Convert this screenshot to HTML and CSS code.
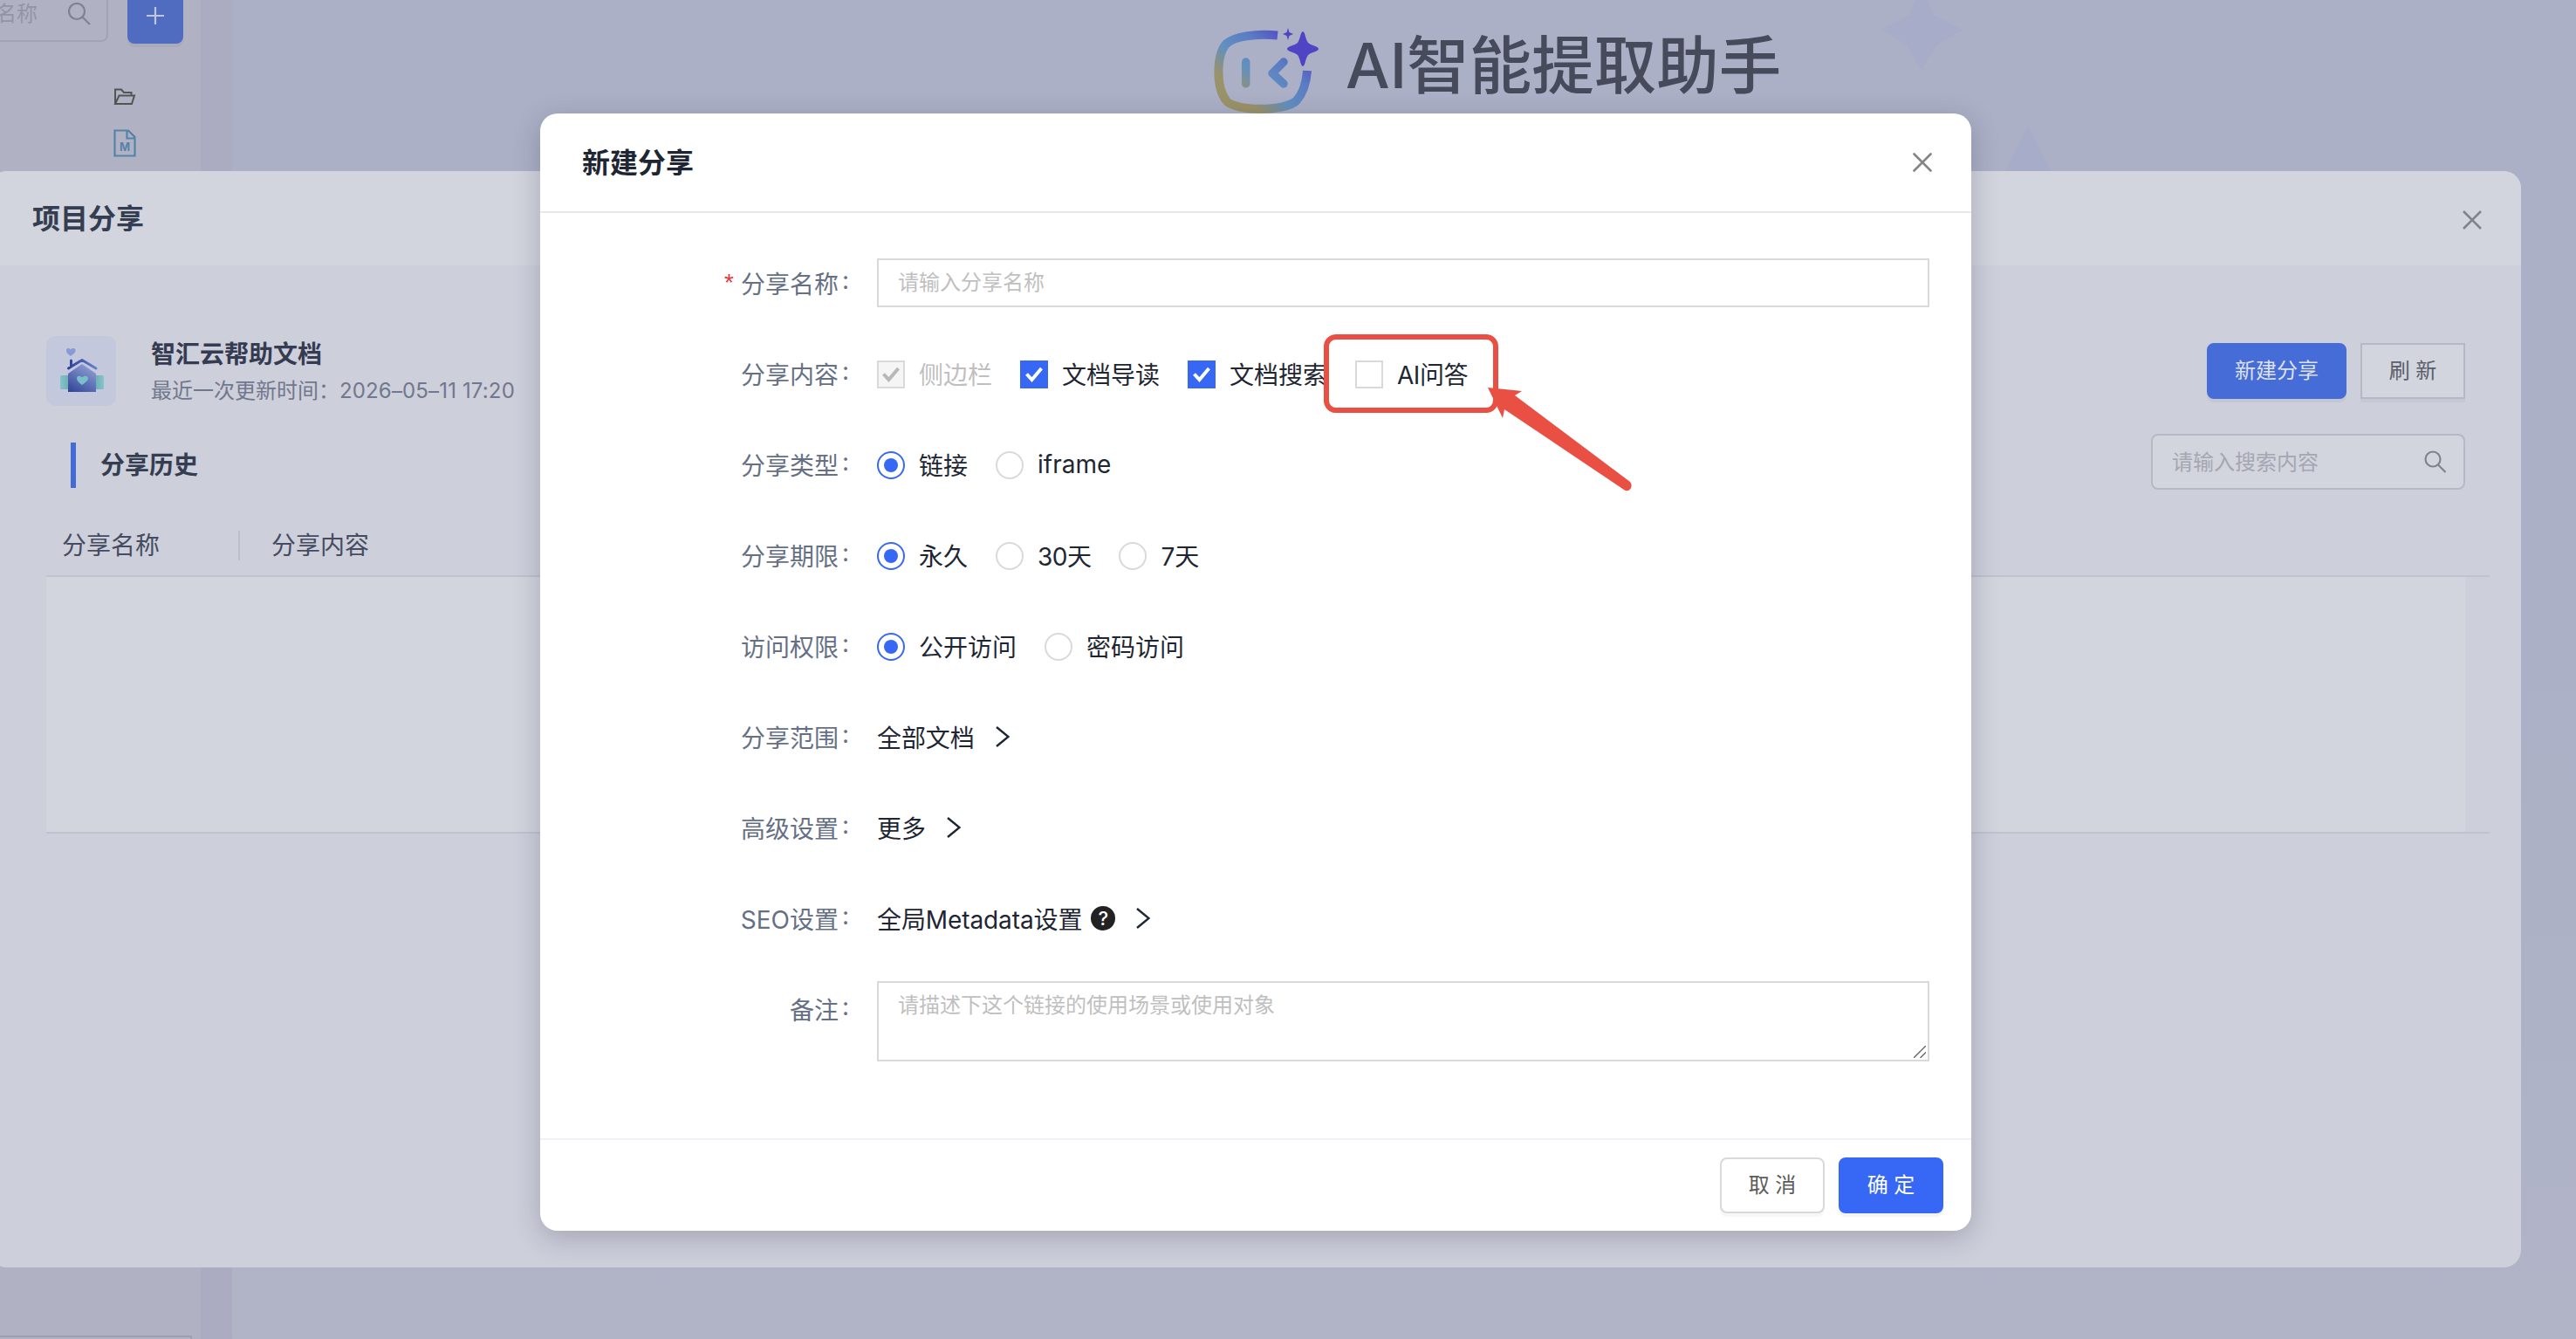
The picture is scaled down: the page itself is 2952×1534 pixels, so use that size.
FILE: index.html
```html
<!DOCTYPE html>
<html lang="zh-CN">
<head>
    <meta charset="utf-8">
    <title>项目分享</title>
    <link rel="stylesheet" href="styles.css">
</head>
<body>
    <div class="page">
        <div class="sidebar">
            <div class="side-top">
                <div class="side-search">
                    <span>名称</span>
                    <svg width="26" height="26" viewBox="0 0 26 26" fill="none" stroke="#7f8292" stroke-width="2.2"><circle cx="10" cy="10" r="9" /><path d="M16.5 16.5L25 25" /></svg>
                </div>
                <div class="side-add">
                    <svg width="20" height="20" viewBox="0 0 20 20" stroke="#c0c6dc" stroke-width="2.2"><path d="M10 0V20M0 10H20" /></svg>
                </div>
            </div>
            <div class="side-tree">
                <svg width="26" height="20" viewBox="0 0 26 20" fill="none" stroke="#515553" stroke-width="2"><path d="M2 18V1.5H9L12 5H20.5V8.5M2 18L6.500 8.500H24L21 18Z" /></svg>
                <svg width="26" height="32" viewBox="0 0 26 32" fill="none" stroke="#5583a8" stroke-width="2.200"><path d="M1.500 1.500H17L24.500 9V30.500H1.500ZM15.500 1.500V10.500H24.500" /><text class="file-type" x="13" y="25" text-anchor="middle">M</text></svg>
            </div>
            <div class="side-bottom"></div>
        </div>
        <div class="gutter"></div>
        <div class="main">
            <div class="hero">
                <svg class="logo" width="126" height="100" viewBox="0 0 126 100" fill="none">
                    <defs>
                        <linearGradient id="lg" gradientUnits="userSpaceOnUse" x1="20" y1="90" x2="92" y2="10">
                            <stop offset="0" stop-color="#9a9269" />
                            <stop offset=".16" stop-color="#9a9269" />
                            <stop offset=".42" stop-color="#6290c0" />
                            <stop offset=".7" stop-color="#5b7bc3" />
                            <stop offset="1" stop-color="#4f45c4" />
                        </linearGradient>
                    </defs>
                    <path stroke="url(#lg)" stroke-width="10" d="M74 9.500C48 7 24 11 15.500 19C4 31 3 68 15 84C24 97 84 97 96 84C103 76 107 64 108 50" />
                    <path stroke="url(#lg)" stroke-width="9.500" stroke-linecap="round" stroke-linejoin="round" d="M37.700 40V65M81 40L68 53L81 65" />
                    <path fill="#4f45c4" d="M103 5C105.500 5 106 14 109 18C112 21 121 22 121 25C121 28 112 29 109 32C106 36 105.500 45 103 45C100.500 45 100 36 97 32C94 29 85 28 85 25C85 22 94 21 97 18C100 14 100.500 5 103 5Z" />
                    <path fill="#4f45c4" d="M86 1L87.500 6L92 8L87.500 10L86 15L84.500 10L80 8L84.500 6Z" />
                </svg>
                <span class="hero-title">AI智能提取助手</span>
            </div>
            <svg class="stars" width="200" height="200" viewBox="0 0 200 200" fill="#a7acc9"><path d="M1 34L32 17L46 -16L60 17L93 34L64 51L46 80L28 51ZM168 145L142 196H194Z" /></svg>
        </div>
    </div>

    <!-- 项目分享 -->
    <div class="drawer">
        <div class="drawer-head">
            <span>项目分享</span>
            <svg width="22" height="22" viewBox="0 0 22 22" stroke="#80838c" stroke-width="2.600"><path d="M1 1L21 21M21 1L1 21" /></svg>
        </div>
        <div class="drawer-body">
            <div class="project">
                <div class="project-icon">
                    <svg width="80" height="80" viewBox="0 0 80 80">
                        <defs>
                            <linearGradient id="house" x1="0" y1="1" x2=".6" y2="0"><stop offset="0" stop-color="#2e4296" /><stop offset="1" stop-color="#8a9ad0" /></linearGradient>
                            <linearGradient id="roof" x1="0" x2="1"><stop offset="0" stop-color="#2e4296" /><stop offset="1" stop-color="#6480c8" /></linearGradient>
                            <linearGradient id="wing" x1="0" x2="1"><stop offset="0" stop-color="#86c3cc" /><stop offset=".25" stop-color="#66a8ae" /><stop offset=".75" stop-color="#66a8ae" /><stop offset="1" stop-color="#86c3cc" /></linearGradient>
                        </defs>
                        <rect x="16" y="45" width="50" height="16" rx="1.500" fill="url(#wing)" />
                        <path fill="url(#house)" d="M25 43L41 32L57 43V64H25Z" />
                        <path fill="none" stroke="url(#roof)" stroke-width="3" stroke-linecap="round" stroke-linejoin="round" d="M25.500 37L28.500 35V28V35L41 27.500L57 37" />
                        <path fill="#79bfca" d="M41 56C37 53 35 51 35 48.500C35 45 39 45 41 47.500C43 45 48 45 48 48.500C48 51 45 53 41 56Z" />
                        <path fill="#869ad8" d="M28 23C24 20 23 18.500 23 16.500C23 13.500 26 13.500 28 15.500C30 13.500 33.500 13.500 33.500 16.500C33.500 18.500 32 20 28 23Z" />
                    </svg>
                </div>
                <div class="project-info">
                    <div class="project-name">智汇云帮助文档</div>
                    <div class="project-time">最近一次更新时间：<span>2026–05–11 17:20</span></div>
                </div>
                <div class="btn btn-primary btn-new">新建分享</div>
                <div class="btn btn-refresh">刷 新</div>
            </div>
            <div class="history">
                <div class="history-title">分享历史</div>
                <div class="history-search">
                    <span>请输入搜索内容</span>
                    <svg width="26" height="26" viewBox="0 0 26 26" fill="none" stroke="#7f828c" stroke-width="2.200"><circle cx="10" cy="10" r="8.500" /><path d="M16 16.500L24.500 25" /></svg>
                </div>
            </div>
            <div class="table">
                <div class="table-head"><span class="col-name">分享名称</span><span class="col-content">分享内容</span></div>
                <div class="table-body"></div>
            </div>
        </div>
    </div>

    <!-- 新建分享 -->
    <div class="dialog">
        <div class="dialog-head">
            <span>新建分享</span>
            <svg width="22" height="22" viewBox="0 0 22 22" stroke="#858585" stroke-width="2.600" stroke-linecap="round"><path d="M1.500 1.500L20.500 20.500M20.500 1.500L1.500 20.500" /></svg>
        </div>
        <div class="form">
            <div class="row">
                <div class="label"><i>*</i>分享名称<b>:</b></div>
                <div class="input">请输入分享名称</div>
            </div>
            <div class="row">
                <div class="label">分享内容<b>:</b></div>
                <div class="option disabled"><span class="check"><svg width="20" height="20" viewBox="0 0 20 20" fill="none" stroke="#b8b8b8" stroke-width="4"><path d="M1.500 9.500L7.500 16L18.500 3" /></svg></span>侧边栏</div>
                <div class="option"><span class="check on"><svg width="20" height="20" viewBox="0 0 20 20" fill="none" stroke="#fff" stroke-width="4"><path d="M1.500 9.500L7.500 16L18.500 3" /></svg></span>文档导读</div>
                <div class="option"><span class="check on"><svg width="20" height="20" viewBox="0 0 20 20" fill="none" stroke="#fff" stroke-width="4"><path d="M1.500 9.500L7.500 16L18.500 3" /></svg></span>文档搜索</div>
                <div class="option option-ai"><span class="check"></span>AI问答</div>
            </div>
            <div class="row">
                <div class="label">分享类型<b>:</b></div>
                <div class="option"><span class="radio on"></span>链接</div>
                <div class="option"><span class="radio"></span>iframe</div>
            </div>
            <div class="row">
                <div class="label">分享期限<b>:</b></div>
                <div class="option"><span class="radio on"></span>永久</div>
                <div class="option option-days"><span class="radio"></span>30天</div>
                <div class="option"><span class="radio"></span>7天</div>
            </div>
            <div class="row">
                <div class="label">访问权限<b>:</b></div>
                <div class="option"><span class="radio on"></span>公开访问</div>
                <div class="option"><span class="radio"></span>密码访问</div>
            </div>
            <div class="row">
                <div class="label">分享范围<b>:</b></div>
                <div class="link">全部文档<svg width="16" height="24" viewBox="0 0 16 24"><path d="M1 1L14.500 12L1 23" /></svg></div>
            </div>
            <div class="row">
                <div class="label">高级设置<b>:</b></div>
                <div class="link">更多<svg width="16" height="24" viewBox="0 0 16 24"><path d="M1 1L14.500 12L1 23" /></svg></div>
            </div>
            <div class="row">
                <div class="label">SEO设置<b>:</b></div>
                <div class="link">全局Metadata设置<span class="help">?</span><svg width="16" height="24" viewBox="0 0 16 24"><path d="M1 1L14.500 12L1 23" /></svg></div>
            </div>
            <div class="row row-remark">
                <div class="label">备注<b>:</b></div>
                <div class="input textarea">请描述下这个链接的使用场景或使用对象
                    <svg width="14" height="14" viewBox="0 0 14 14" stroke="#666" stroke-width="1.400"><path d="M0 14L14 0M7.500 14L14 7.500" /></svg>
                </div>
            </div>
        </div>
        <div class="dialog-foot">
            <div class="btn">取 消</div>
            <div class="btn btn-primary">确 定</div>
        </div>
    </div>

    <!-- 标注 -->
    <div class="mark"></div>
    <svg class="arrow" width="180" height="130" viewBox="0 0 180 130" fill="#e94f43"><path d="M5 4L44 8L36 13L168 112Q171 116 168.500 120Q165 124 161 121L24 29L22 39Z" /></svg>
</body>
</html>
```
FILE: styles.css
```css
* {
    box-sizing: border-box;
}

body {
    margin: 0;
    width: 2952px;
    height: 1534px;
    position: relative;
    overflow: hidden;
    font-family: Inter, "Noto Sans CJK SC", sans-serif;
    font-size: 28px;
    color: #1f2633;
}

svg {
    display: block;
    flex-shrink: 0;
}

.page {
    display: flex;
    height: 100%;
}

.sidebar {
    width: 230px;
    display: flex;
    flex-direction: column;
    background: #b0b2c3;
}

.side-top {
    display: flex;
    height: 50px;
    gap: 22px;
}

.side-search {
    width: 124px;
    height: 48px;
    padding: 0 18px 14px 0;
    display: flex;
    align-items: center;
    justify-content: space-between;
    border-right: 2px solid #a2a4b4;
    border-bottom: 2px solid #a2a4b4;
    border-bottom-right-radius: 8px;
    font-size: 24px;
    line-height: 32px;
    color: #9395a5;
}

    .side-search span {
        margin-left: -5px;
    }

.side-add {
    width: 64px;
    height: 50px;
    padding-top: 8px;
    display: flex;
    justify-content: center;
    background: #506cc0;
    border-radius: 0 0 8px 8px;
    box-shadow: 0 4px 0 rgba(0, 0, 0, .04);
}

.side-tree {
    flex: 1;
    padding: 51px 0 0 130px;
    display: flex;
    flex-direction: column;
    gap: 27px;
}

.file-type {
    font-size: 13px;
    font-weight: bold;
    fill: #5583a8;
    stroke: none;
}

.side-bottom {
    width: 220px;
    height: 4px;
    border: 2px solid #9c9fb2;
    border-width: 2px 2px 0 0;
}

.gutter {
    width: 36px;
    background: #abacc2;
}

.main {
    flex: 1;
    position: relative;
    background: linear-gradient(#abb0c7, #abb0c6 50%, #b1b4c7);
}

.hero {
    padding: 31px 0 0 1124px;
    display: flex;
    gap: 26px;
}

.hero-title {
    margin-top: -8px;
    font-size: 71.5px;
    line-height: 104px;
    font-weight: 500;
    color: #474a5b;
}

.stars {
    position: absolute;
    left: 1890px;
    top: 0;
}

.drawer {
    position: absolute;
    left: -12px;
    top: 196px;
    width: 2901px;
    height: 1256px;
    border-radius: 20px;
    background: #cdcfdb;
}

    .drawer:before {
        content: "";
        position: absolute;
        z-index: -1;
        top: 0;
        left: 0;
        right: 0;
        height: 1140px;
        border-radius: 20px;
        box-shadow: 0 8px 32px rgba(40, 40, 80, .2);
    }

.drawer-head {
    height: 108px;
    padding: 0 45px 0 49px;
    display: flex;
    align-items: center;
    justify-content: space-between;
    background: #d2d5de;
    border-radius: 20px 20px 0 0;
    font-size: 32px;
    font-weight: bold;
    color: #353d50;
}

    .drawer-head span {
        margin-top: -4px;
    }

    .drawer-head svg {
        margin-top: 4px;
    }

.drawer-body {
    padding: 81px 36px 0 65px;
}

.project {
    display: flex;
    align-items: flex-start;
    padding-right: 28px;
}

.project-icon {
    width: 80px;
    height: 80px;
    border-radius: 10px;
    background: #c3c8dc;
}

.project-info {
    flex: 1;
    margin-left: 40px;
    padding-top: 1px;
}

.project-name {
    line-height: 40px;
    font-weight: bold;
    color: #353b50;
}

.project-time {
    margin-top: 4px;
    font-size: 24px;
    line-height: 36px;
    color: #71778d;
}

    .project-time span {
        letter-spacing: .15px;
    }

.btn {
    width: 120px;
    height: 64px;
    line-height: 60px;
    text-align: center;
    font-size: 24px;
    background: #fff;
    border: 2px solid #d9d9d9;
    border-radius: 8px;
    color: #5c5c5c;
    box-shadow: 0 4px 0 rgba(0, 0, 0, .03);
}

.btn-primary {
    background: #3768f5;
    border-color: #3768f5;
    color: #fff;
    box-shadow: 0 4px 0 rgba(0, 0, 0, .045);
}

.btn-new {
    width: 160px;
    margin: 8px 16px 0 0;
    background: #466cd7;
    border-color: #466cd7;
    color: #dde0e8;
}

.btn-refresh {
    margin-top: 8px;
    border-radius: 0;
    background: #d2d5de;
    border-color: #b6b9c5;
    color: #5b5e68;
}

.history {
    display: flex;
    justify-content: space-between;
    padding: 31px 28px 0 28px;
    height: 123px;
}

.history-title {
    margin-top: 10px;
    height: 52px;
    line-height: 52px;
    padding-left: 28px;
    border-left: 6px solid #426bd9;
    font-weight: bold;
    color: #353d50;
}

.history-search {
    width: 360px;
    height: 64px;
    padding: 0 19px 0 22px;
    display: flex;
    align-items: center;
    justify-content: space-between;
    background: #d2d5de;
    border: 2px solid #b6b9c5;
    border-radius: 8px;
    font-size: 24px;
    color: #a4a7b2;
}

    .history-search span {
        margin-top: -3px;
    }

.table-head {
    height: 72px;
    padding-top: 2px;
    display: flex;
    align-items: center;
    border-bottom: 2px solid #c0c2cf;
    color: #454b60;
}

.col-name {
    width: 222px;
    padding-left: 18px;
    line-height: 34px;
    border-right: 2px solid #bdbfcb;
}

.col-content {
    padding-left: 36px;
    line-height: 34px;
}

.table-body {
    height: 294px;
    border-bottom: 2px solid #c0c2cf;
    background: linear-gradient(#d2d5de, #d2d5de) no-repeat 0 0 / 2772px 100%;
}

.dialog {
    position: absolute;
    left: 619px;
    top: 130px;
    width: 1640px;
    height: 1280px;
    display: flex;
    flex-direction: column;
    background: #fff;
    border-radius: 20px;
    box-shadow: 0 8px 32px rgba(30, 30, 50, .24);
}

.dialog-head {
    height: 114px;
    padding: 0 45px 0 48px;
    display: flex;
    align-items: center;
    justify-content: space-between;
    border-bottom: 2px solid #e8e8e8;
    font-size: 32px;
    font-weight: bold;
}

    .dialog-head span {
        margin-top: -4px;
    }

.form {
    flex: 1;
    padding-top: 28px;
}

.row {
    display: flex;
    height: 104px;
    align-items: center;
}

.label {
    width: 386px;
    display: flex;
    justify-content: flex-end;
    color: #667085;
}

    .label i {
        margin-right: 8px;
        padding-top: 4px;
        font-family: "Liberation Sans", sans-serif;
        font-style: normal;
        font-size: 28px;
        color: #e03a3a;
    }

    .label b {
        width: 44px;
        padding-left: 4px;
        font-weight: normal;
    }

.input {
    width: 1206px;
    height: 56px;
    padding: 0 22px;
    line-height: 52px;
    border: 2px solid #d9d9d9;
    font-size: 24px;
    color: #bfbfbf;
}

.option {
    display: flex;
    align-items: center;
    margin-right: 32px;
}

.option-ai,
.option-days {
    letter-spacing: -.5px;
}

.disabled {
    color: #bfbfbf;
}

.check,
.radio {
    width: 32px;
    height: 32px;
    margin: 2px 16px 0 0;
    display: flex;
    align-items: center;
    justify-content: center;
    border: 2px solid #d9d9d9;
}

.disabled .check {
    background: #f5f5f5;
}

.check.on {
    background: #3768f5;
    border-color: #3768f5;
}

.radio {
    border-radius: 50%;
}

    .radio.on {
        border-color: #3768f5;
    }

        .radio.on:after {
            content: "";
            width: 16px;
            height: 16px;
            border-radius: 50%;
            background: #3768f5;
        }

.link {
    display: flex;
    align-items: center;
    letter-spacing: -.1px;
}

    .link svg {
        margin-left: 24px;
        fill: none;
        stroke: #1f2633;
        stroke-width: 2.4;
    }

.help {
    width: 28px;
    height: 28px;
    margin-left: 10px;
    line-height: 28px;
    text-align: center;
    border-radius: 50%;
    background: #222;
    color: #fff;
    font-size: 22px;
    font-weight: 500;
}

.row-remark {
    align-items: flex-start;
}

    .row-remark .label {
        padding-top: 32px;
    }

.textarea {
    position: relative;
    height: 92px;
    margin-top: 20px;
}

    .textarea svg {
        position: absolute;
        right: 2px;
        bottom: 2px;
    }

.dialog-foot {
    height: 106px;
    padding: 20px 32px 0 0;
    display: flex;
    justify-content: flex-end;
    gap: 16px;
    border-top: 2px solid #eef1f6;
}

.mark {
    position: absolute;
    left: 1517px;
    top: 383px;
    width: 200px;
    height: 90px;
    border: 6px solid #e94f43;
    border-radius: 14px;
}

.arrow {
    position: absolute;
    left: 1700px;
    top: 440px;
}
```
